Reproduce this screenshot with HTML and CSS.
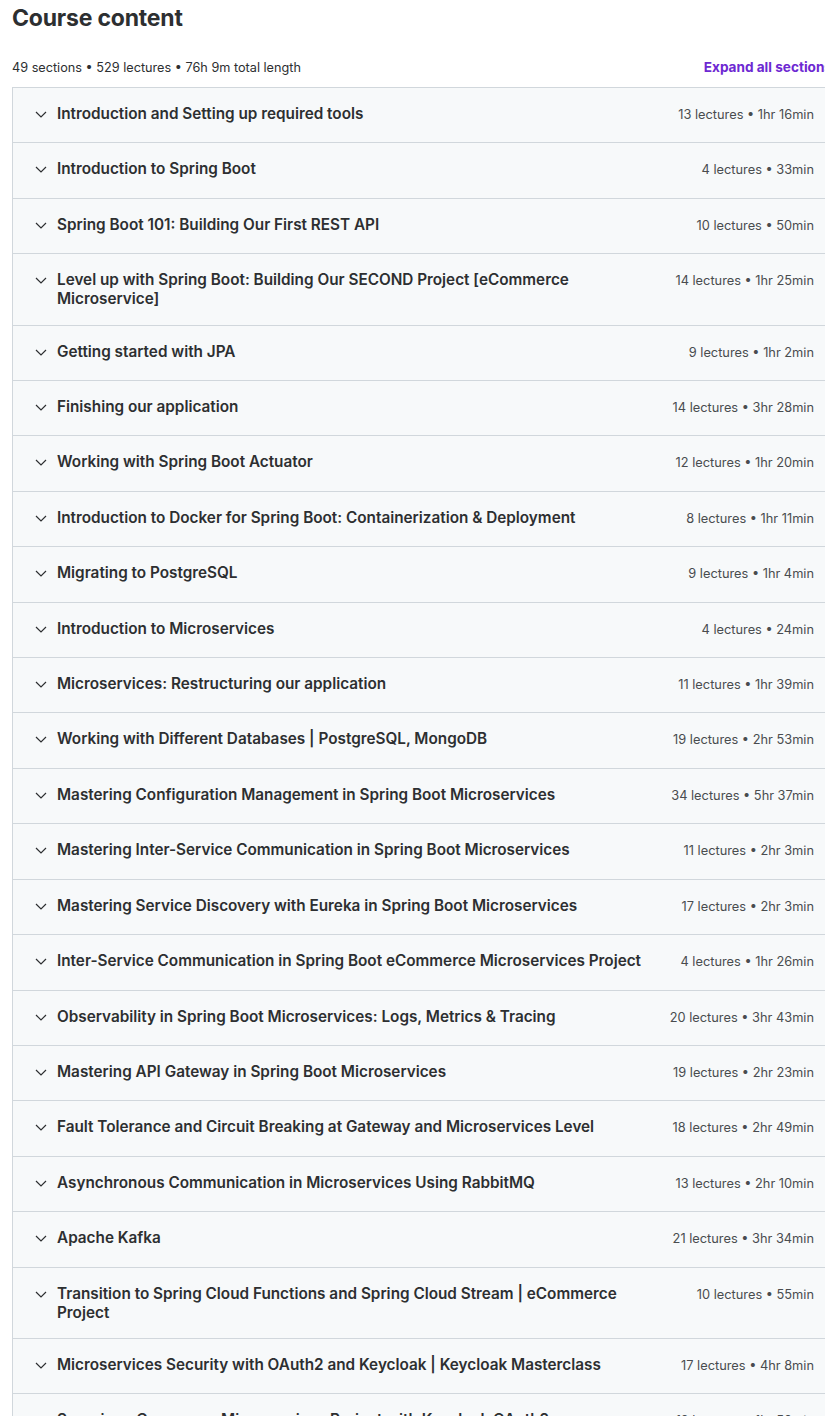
FILE: index.html
```html
<!DOCTYPE html>
<html lang="en">
<head>
<meta charset="utf-8">
<title>Course content</title>
<link rel="stylesheet" href="styles.css">
</head>
<body>
<div class="page">
  <h2 class="title">Course content</h2>
  <div class="summary">
    <span class="summary-text">49 sections • 529 lectures • 76h 9m total length</span>
    <button class="expand">Expand all sections</button>
  </div>
  <div class="sections">
    <div class="section"><div class="sec-left"><svg class="chev" viewBox="0 0 16 16"><path d="M3 6l5 5 5-5"/></svg><span class="sec-title">Introduction and Setting up required tools</span></div><span class="sec-meta">13 lectures • 1hr 16min</span></div>
    <div class="section"><div class="sec-left"><svg class="chev" viewBox="0 0 16 16"><path d="M3 6l5 5 5-5"/></svg><span class="sec-title">Introduction to Spring Boot</span></div><span class="sec-meta">4 lectures • 33min</span></div>
    <div class="section"><div class="sec-left"><svg class="chev" viewBox="0 0 16 16"><path d="M3 6l5 5 5-5"/></svg><span class="sec-title">Spring Boot 101: Building Our First REST API</span></div><span class="sec-meta">10 lectures • 50min</span></div>
    <div class="section"><div class="sec-left"><svg class="chev" viewBox="0 0 16 16"><path d="M3 6l5 5 5-5"/></svg><span class="sec-title">Level up with Spring Boot: Building Our SECOND Project [eCommerce Microservice]</span></div><span class="sec-meta">14 lectures • 1hr 25min</span></div>
    <div class="section"><div class="sec-left"><svg class="chev" viewBox="0 0 16 16"><path d="M3 6l5 5 5-5"/></svg><span class="sec-title">Getting started with JPA</span></div><span class="sec-meta">9 lectures • 1hr 2min</span></div>
    <div class="section"><div class="sec-left"><svg class="chev" viewBox="0 0 16 16"><path d="M3 6l5 5 5-5"/></svg><span class="sec-title">Finishing our application</span></div><span class="sec-meta">14 lectures • 3hr 28min</span></div>
    <div class="section"><div class="sec-left"><svg class="chev" viewBox="0 0 16 16"><path d="M3 6l5 5 5-5"/></svg><span class="sec-title">Working with Spring Boot Actuator</span></div><span class="sec-meta">12 lectures • 1hr 20min</span></div>
    <div class="section"><div class="sec-left"><svg class="chev" viewBox="0 0 16 16"><path d="M3 6l5 5 5-5"/></svg><span class="sec-title">Introduction to Docker for Spring Boot: Containerization &amp; Deployment</span></div><span class="sec-meta">8 lectures • 1hr 11min</span></div>
    <div class="section"><div class="sec-left"><svg class="chev" viewBox="0 0 16 16"><path d="M3 6l5 5 5-5"/></svg><span class="sec-title">Migrating to PostgreSQL</span></div><span class="sec-meta">9 lectures • 1hr 4min</span></div>
    <div class="section"><div class="sec-left"><svg class="chev" viewBox="0 0 16 16"><path d="M3 6l5 5 5-5"/></svg><span class="sec-title">Introduction to Microservices</span></div><span class="sec-meta">4 lectures • 24min</span></div>
    <div class="section"><div class="sec-left"><svg class="chev" viewBox="0 0 16 16"><path d="M3 6l5 5 5-5"/></svg><span class="sec-title">Microservices: Restructuring our application</span></div><span class="sec-meta">11 lectures • 1hr 39min</span></div>
    <div class="section"><div class="sec-left"><svg class="chev" viewBox="0 0 16 16"><path d="M3 6l5 5 5-5"/></svg><span class="sec-title">Working with Different Databases | PostgreSQL, MongoDB</span></div><span class="sec-meta">19 lectures • 2hr 53min</span></div>
    <div class="section"><div class="sec-left"><svg class="chev" viewBox="0 0 16 16"><path d="M3 6l5 5 5-5"/></svg><span class="sec-title">Mastering Configuration Management in Spring Boot Microservices</span></div><span class="sec-meta">34 lectures • 5hr 37min</span></div>
    <div class="section"><div class="sec-left"><svg class="chev" viewBox="0 0 16 16"><path d="M3 6l5 5 5-5"/></svg><span class="sec-title">Mastering Inter-Service Communication in Spring Boot Microservices</span></div><span class="sec-meta">11 lectures • 2hr 3min</span></div>
    <div class="section"><div class="sec-left"><svg class="chev" viewBox="0 0 16 16"><path d="M3 6l5 5 5-5"/></svg><span class="sec-title">Mastering Service Discovery with Eureka in Spring Boot Microservices</span></div><span class="sec-meta">17 lectures • 2hr 3min</span></div>
    <div class="section"><div class="sec-left"><svg class="chev" viewBox="0 0 16 16"><path d="M3 6l5 5 5-5"/></svg><span class="sec-title">Inter-Service Communication in Spring Boot eCommerce Microservices Project</span></div><span class="sec-meta">4 lectures • 1hr 26min</span></div>
    <div class="section"><div class="sec-left"><svg class="chev" viewBox="0 0 16 16"><path d="M3 6l5 5 5-5"/></svg><span class="sec-title">Observability in Spring Boot Microservices: Logs, Metrics &amp; Tracing</span></div><span class="sec-meta">20 lectures • 3hr 43min</span></div>
    <div class="section"><div class="sec-left"><svg class="chev" viewBox="0 0 16 16"><path d="M3 6l5 5 5-5"/></svg><span class="sec-title">Mastering API Gateway in Spring Boot Microservices</span></div><span class="sec-meta">19 lectures • 2hr 23min</span></div>
    <div class="section"><div class="sec-left"><svg class="chev" viewBox="0 0 16 16"><path d="M3 6l5 5 5-5"/></svg><span class="sec-title">Fault Tolerance and Circuit Breaking at Gateway and Microservices Level</span></div><span class="sec-meta">18 lectures • 2hr 49min</span></div>
    <div class="section"><div class="sec-left"><svg class="chev" viewBox="0 0 16 16"><path d="M3 6l5 5 5-5"/></svg><span class="sec-title">Asynchronous Communication in Microservices Using RabbitMQ</span></div><span class="sec-meta">13 lectures • 2hr 10min</span></div>
    <div class="section"><div class="sec-left"><svg class="chev" viewBox="0 0 16 16"><path d="M3 6l5 5 5-5"/></svg><span class="sec-title">Apache Kafka</span></div><span class="sec-meta">21 lectures • 3hr 34min</span></div>
    <div class="section"><div class="sec-left"><svg class="chev" viewBox="0 0 16 16"><path d="M3 6l5 5 5-5"/></svg><span class="sec-title">Transition to Spring Cloud Functions and Spring Cloud Stream | eCommerce Project</span></div><span class="sec-meta">10 lectures • 55min</span></div>
    <div class="section"><div class="sec-left"><svg class="chev" viewBox="0 0 16 16"><path d="M3 6l5 5 5-5"/></svg><span class="sec-title">Microservices Security with OAuth2 and Keycloak | Keycloak Masterclass</span></div><span class="sec-meta">17 lectures • 4hr 8min</span></div>
    <div class="section"><div class="sec-left"><svg class="chev" viewBox="0 0 16 16"><path d="M3 6l5 5 5-5"/></svg><span class="sec-title">Securing eCommerce Microservices Project with Keycloak OAuth2</span></div><span class="sec-meta">12 lectures • 1hr 50min</span></div>
  </div>
</div>
</body>
</html>
```

FILE: styles.css
```css
html, body {
  margin: 0;
  padding: 0;
  overflow: hidden;
  background: #ffffff;
}
body {
  font-family: Inter, "Noto Sans", "Liberation Sans", sans-serif;
  color: #2d2f31;
}
.page {
  width: 820px;
  padding: 0 0 0 12px;
}
.title {
  margin: 0;
  padding-top: 3px;
  font-size: 23px;
  line-height: 30px;
  font-weight: 700;
  letter-spacing: -0.2px;
}
.summary {
  display: flex;
  justify-content: space-between;
  align-items: center;
  margin-top: 24px;
  height: 20px;
  margin-bottom: 10px;
}
.summary-text {
  font-size: 12.7px;
  color: #2d2f31;
}
.expand {
  border: 0;
  background: none;
  padding: 0;
  font-family: inherit;
  font-size: 13.6px;
  font-weight: 700;
  color: #6d28d2;
  white-space: nowrap;
}
.sections {
  border: 1px solid #d1d7dc;
  border-bottom: 0;
}
.section {
  display: flex;
  justify-content: space-between;
  align-items: flex-start;
  gap: 32px;
  padding: 16px 17px 16px 20px;
  background: #f7f9fa;
  border-bottom: 1px solid #d1d7dc;
}
.sec-left {
  flex: 1;
  min-width: 0;
  display: flex;
  align-items: flex-start;
  gap: 8px;
}
.chev {
  flex: none;
  width: 16px;
  height: 16px;
  margin-top: 2px;
  fill: none;
  stroke: #2d2f31;
  stroke-width: 1.2;
}
.sec-title {
  font-size: 15.3px;
  line-height: 19.2px;
  font-weight: 600;
}
.sec-meta {
  flex: none;
  font-size: 12.8px;
  line-height: 22.4px;
  color: #494c4f;
}
```
